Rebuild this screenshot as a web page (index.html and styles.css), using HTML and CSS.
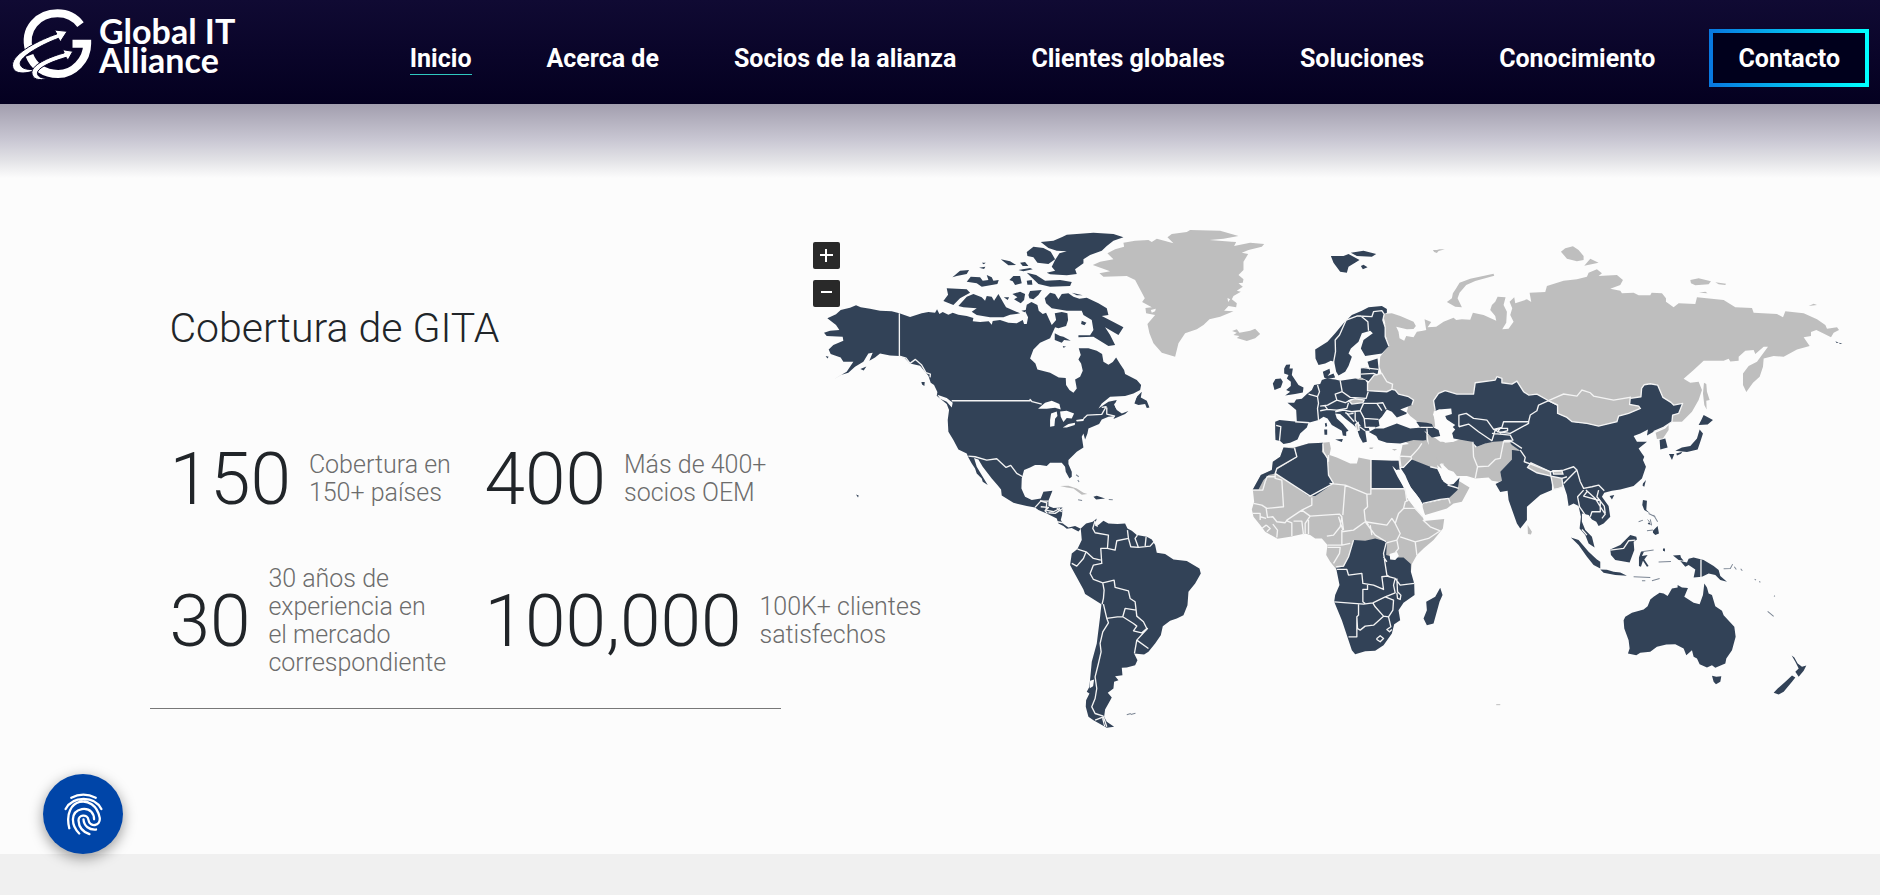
FILE: index.html
```html
<!DOCTYPE html>
<html lang="es">
<head>
<meta charset="utf-8">
<meta name="viewport" content="width=device-width, initial-scale=1">
<title>Global IT Alliance</title>
<link rel="stylesheet" href="styles.css">
</head>
<body>
<header class="header">
  <a class="brand" href="#inicio" aria-label="Global IT Alliance">
    <svg class="brand-mark" viewBox="30 24 248 222" aria-hidden="true">
      <path d="M87 152C68 85 116 40 172 40C199 40 223 50 241 74" fill="none" stroke="#fff" stroke-width="24"/>
      <path d="M217 131H261C261 180 220 222 174 222C130 222 100 198 88 166" fill="none" stroke="#fff" stroke-width="24"/>
      <path d="M201 94L163 90L170 102C124 117 35 160 37 196C38 228 87 221 111 208C86 210 60 208 60 190C61 169 126 133 175 115L180 126Z" fill="#fff" stroke="#09052a" stroke-width="3"/>
      <path d="M218 154L188 149L192 159C160 167 95 191 95 218C96 237 116 244 142 235C121 235 110 229 112 216C118 200 160 183 198 172L203 181Z" fill="#fff" stroke="#09052a" stroke-width="3"/>
    </svg>
    <span class="brand-text">Global IT<br>Alliance</span>
  </a>
  <nav class="nav">
    <a class="nav-link nav-link-active" href="#inicio">Inicio</a>
    <a class="nav-link" href="#acerca">Acerca de</a>
    <a class="nav-link" href="#socios">Socios de la alianza</a>
    <a class="nav-link" href="#clientes">Clientes globales</a>
    <a class="nav-link" href="#soluciones">Soluciones</a>
    <a class="nav-link" href="#conocimiento">Conocimiento</a>
  </nav>
  <a class="contact" href="#contacto">Contacto</a>
</header>
<main class="coverage">
  <section class="facts">
    <h1 class="title">Cobertura de GITA</h1>
    <div class="stats">
      <div class="stat"><strong class="number">150</strong><span class="label">Cobertura en<br>150+ países</span></div>
      <div class="stat"><strong class="number">400</strong><span class="label">Más de 400+<br>socios OEM</span></div>
      <div class="stat"><strong class="number">30</strong><span class="label">30 años de<br>experiencia en<br>el mercado<br>correspondiente</span></div>
      <div class="stat"><strong class="number">100,000</strong><span class="label">100K+ clientes<br>satisfechos</span></div>
    </div>
  </section>
  <section class="map">
    <svg class="world" viewBox="813 220 1067 515" role="img" aria-label="Mapa de cobertura mundial">
      <!-- North America -->
      <g transform="translate(800 220) scale(.33333)">
        <path class="on" d="M82 295L108 283L122 270L150 263L168 256L182 262L210 266L240 272L275 274L298 280L330 291L365 280L385 276L405 278L411 268L418 282L428 276L445 284L458 278L475 284L500 288L520 294L518 304L540 306L566 304L575 314L578 303L600 300L625 308L650 310L668 300L672 312L680 312L684 292L676 275L680 254L694 246L712 255L716 272L728 282L738 278L748 300L755 315L768 300L764 280L785 276L802 280L804 300L798 318L775 325L765 322L750 355L720 368L700 388L690 415L706 430L712 448L750 458L776 472L797 474L798 495L808 510L820 518L830 505L825 478L840 470L848 452L843 430L835 418L842 405L836 385L865 385L890 392L906 402L910 425L925 434L938 426L948 412L960 432L972 450L975 462L1010 480L1023 495L1020 510L1000 520L975 528L930 530L905 550L895 565L925 545L950 540L943 555L950 570L965 580L985 573L975 582L940 597L945 588L925 590L905 598L897 612L865 625L862 640L855 658L850 640L845 650L850 682L830 695L805 720L805 732L815 755L815 770L808 775L797 755L795 740L785 728L765 728L750 728L740 738L720 735L705 735L690 742L672 750L665 775L664 805L675 830L695 840L722 835L730 815L757 812L752 825L745 842L745 858L760 864L787 862L786 885L782 900L790 912L805 922L825 918L842 926L835 934L815 924L800 926L790 918L775 910L770 895L740 880L715 870L705 862L680 858L640 848L605 826L603 808L592 795L575 775L548 740L535 718L522 714L530 740L548 770L563 795L548 785L545 775L530 760L525 745L515 730L505 712L500 700L475 688L460 660L445 635L443 600L447 570L440 552L410 527L412 516L402 495L392 488L385 467L360 437L330 430L312 412L298 408L270 406L240 400L225 412L208 422L218 398L205 400L190 425L165 440L145 458L125 464L100 478L140 455L160 425L130 425L122 412L92 402L86 388L100 375L130 362L128 350L80 348L72 338L90 332L118 330L108 315Z"/>
        <path class="on" d="M722 66L760 62L788 50L800 44L880 38L940 42L970 52L940 62L920 78L905 92L870 105L850 118L850 130L825 148L830 162L800 166L750 163L740 158L765 152L755 140L765 120L778 100L800 94L770 92L745 84Z"/>
        <path class="on" d="M680 96L700 80L730 84L752 95L765 118L745 132L712 128L700 112L682 108ZM680 158L708 165L735 182L780 180L815 186L810 198L750 200L715 192ZM734 235L750 218L765 222L775 238L785 222L805 220L820 230L838 236L860 233L895 250L920 265L925 285L905 288L940 306L970 322L955 345L915 322L930 345L945 375L925 378L880 350L835 352L835 346L870 346L880 330L875 300L850 285L845 272L800 272L755 265L738 250ZM815 218L848 226L830 226Z"/>
        <path class="on" d="M440 205L500 208L510 218L480 235L460 255L430 243L444 224ZM475 258L500 230L520 222L545 232L555 242L560 228L575 230L582 242L595 222L610 248L618 262L660 280L630 284L610 292L570 292L530 285L515 275L530 265L490 262ZM457 172L480 152L507 150L500 162L470 168ZM500 185L512 170L540 172L548 182L565 180L560 165L575 172L580 182L596 180L592 192L545 200L530 190ZM602 118L630 124L648 135L625 136ZM628 180L640 168L660 168L665 190L645 195L638 184ZM660 128L675 126L685 138L668 138ZM655 150L690 144L698 148L670 154ZM680 182L695 180L697 194L682 194ZM637 222L660 215L675 222L672 240L662 250L642 238L652 232ZM685 225L690 213L725 210L715 225L700 238L688 235ZM537 143L556 140L552 147ZM545 128h12l-6 5zM611 232l16 0-4 8zM664 272l16-3-6 8zM764 340L780 348L790 350L812 362L792 360L785 368L764 360ZM845 302l14 6-6 8-10-4zM788 378l10 2-8 3zM1003 550L1010 530L1025 515L1022 532L1040 542L1048 562L1040 564L1035 552L1015 555ZM181 447l18-8-8 12zM77 408l9 2-4 5zM364 486l10 0-1 12-7-5zM168 823l8 3-2 6zM880 830L890 827L915 835L888 838Z"/>
        <path class="off" d="M780 798L805 797L830 805L850 818L862 822L845 824L820 805L800 802Z"/>
        <path class="detail" d="M828 764l8 6M833 780l4 6M834 839l12 2M926 838l12 1"/>
        <path class="water" d="M714 566L735 548L755 542L778 552L782 568L765 563L740 566ZM753 580L770 574L772 588L765 596L763 618L750 620L750 600ZM780 574L800 572L822 580L815 595L800 594L790 606L782 590ZM788 622L805 612L825 608L824 615L800 622ZM828 600L852 596L850 603L830 604ZM942 552L960 540L1000 525L1012 526L1000 548L975 556L978 566L960 572L948 566ZM412 524L440 534L458 548L455 562L440 545L420 536Z"/>
        <path class="border" d="M298 280V408L318 414L330 430L346 418L365 435L378 458L391 462L390 472M455 542H690V538L696 545L725 552M850 596L862 585L905 583L918 560L905 562M920 562V582L945 588M505 708L525 710L560 720L590 716L618 742L632 736L650 760L668 770M705 862L722 843L745 843M722 860L745 862L735 872L742 880M770 865L785 875M745 878L765 880L790 864M770 905L790 908"/>
      </g>
      <!-- Greenland and Iceland -->
      <g transform="translate(1020 220) scale(.33333)">
        <path class="off" d="M218 135L240 125L280 118L262 100L285 88L312 80L310 68L345 62L385 60L395 66L410 56L460 70L442 52L455 42L500 36L510 30L600 32L655 48L610 56L568 60L635 65L648 66L642 78L690 68L732 72L725 80L685 90L665 98L684 102L670 125L670 150L655 165L670 178L668 188L655 190L668 200L650 212L662 215L640 228L635 238L650 250L648 262L625 258L612 272L640 274L600 290L568 298L550 315L530 328L495 340L475 370L465 410L425 398L400 370L388 340L382 312L405 285L378 280L376 264L395 262L366 246L374 235L345 180L320 168L250 170L238 160L270 154Z"/>
        <path class="water" d="M392 270l15-4-2 8-10 4zM622 234l8 4-6 8z"/>
        <path class="off" d="M636 333L650 328L658 338L690 332L705 326L720 342L705 355L680 363L650 354L658 348L640 345L650 338Z"/>
      </g>
      <!-- South America -->
      <g transform="translate(1040 500) scale(.33333)">
        <path class="on" d="M122 85L138 70L158 65L170 55L165 72L175 75L190 62L205 70L232 72L255 70L262 85L275 92L290 105L320 110L335 118L345 135L350 158L375 162L400 178L440 183L478 205L482 220L465 250L445 275L442 315L430 345L410 355L390 362L368 378L362 405L345 430L325 455L312 463L282 460L292 480L285 495L260 502L245 503L247 525L225 528L235 540L222 545L220 565L203 578L215 592L208 605L195 628L192 650L200 665L222 680L200 683L160 660L145 650L137 620L138 600L148 580L140 575L148 560L155 485L170 430L180 350L184 312L135 282L130 268L98 210L90 195L95 160L112 147L125 120Z"/>
        <path class="water" d="M165 65l8 0 0 16-8-4zM150 542l12-4-3 20-10 6zM190 648l2 20 4 12-4-2-6-22z"/>
        <path class="border" d="M165 62L158 85L165 98L205 105L202 145L182 145L185 190L160 195L150 220L160 238L188 248L222 240L225 262L265 272L270 295L285 305L288 330L255 325L248 350L280 370L290 378L280 392L305 398L320 385L310 365L290 348L288 330M112 147L138 155L160 175L182 180M138 155L130 175L110 198L95 190M202 145L225 150L230 122L265 115L262 90M265 115L272 140L295 142L285 115L292 105M295 142L330 138L342 125M318 110L315 138M188 248L192 270L190 295L186 312M190 312L200 355L232 350L248 350M200 355L205 368L188 395L180 430L183 455L175 490L165 530L170 565L165 595L155 620L165 640L190 648M305 398L322 385L290 420L325 445M290 420L283 460M165 660L190 650L200 680"/>
        <path class="border" d="M0 2L20 8L18 30M18 30L40 35L60 25"/>
        <path class="detail" d="M260 644l12-4M272 643l14-4"/>
      </g>
      <!-- Russia and northern islands -->
      <g transform="translate(1420 230) scale(.33333)">
        <path class="off" d="M-112 252L-85 250L-60 258L-20 275L-13 288L-20 297L-40 298L-72 290L-65 305L-62 325L-48 332L-42 318L-20 322L-10 305L8 302L18 300L13 268L33 276L22 292L48 290L70 275L100 263L108 270L125 268L150 269L158 248L190 255L228 272L225 258L210 240L215 225L225 215L232 200L256 202L250 225L260 245L258 278L246 298L265 296L280 275L270 255L276 235L268 215L282 202L285 220L320 208L333 216L328 188L375 186L380 168L430 152L470 148L500 140L505 128L530 118L545 130L535 138L590 135L608 150L600 165L570 176L600 182L605 190L640 188L655 196L690 196L694 188L725 190L737 205L737 215L760 232L775 220L825 222L830 202L910 210L945 232L995 234L1000 248L1070 252L1088 262L1095 244L1150 250L1190 268L1215 285L1220 296L1250 292L1256 300L1240 308L1232 322L1205 308L1188 300L1172 306L1172 318L1150 322L1168 348L1130 358L1090 380L1060 378L1030 385L1028 410L1018 440L998 458L978 486L968 465L968 430L985 408L1010 395L1043 350L1030 350L1005 372L1000 360L975 362L955 380L955 392L930 394L925 386L910 392L850 392L820 420L790 446L810 458L835 455L845 480L835 510L815 545L785 575L757 575L500 540L320 520L60 530L40 545L45 590L15 592L-30 558L-40 545L-35 525L-85 480L-100 455L-115 430L-122 410L-120 380L-95 348L-105 310L-105 280Z"/>
        <path class="off" d="M422 65L435 55L458 49L475 60L490 78L490 90L470 94L440 86ZM510 86L535 98L492 107ZM810 150L835 145L872 154L865 163L825 166L812 160ZM885 157L917 161L915 165L895 163ZM836 188L855 185L862 190ZM1165 228L1180 221L1190 225ZM38 60L50 60L58 58L74 58L55 63L50 69L42 66ZM80 216L95 205L98 190L108 175L118 158L150 146L220 131L222 137L165 153L138 165L118 188L112 205L125 232L105 230Z"/>
        <path class="on" d="M1245 334l10 4-6 1zM1257 338l9 4h-8z"/>
        <path class="off" d="M851 458L858 462L860 485L868 510L858 512L859 538L852 525L848 490Z"/>
      </g>
      <!-- Middle East, Central Asia, East Asia -->
      <g transform="translate(1420 370) scale(.33333)">
        <path class="off" d="M-60 205L15 188L40 200L60 215L100 215L125 205L158 215L165 232L215 212L250 210L275 215L305 235L275 245L275 268L240 305L245 332L235 335L215 332L205 322L165 325L140 318L110 318L100 305L85 300L65 280L48 285L30 262Z"/>
        <path class="on" d="M40 92L55 70L75 62L110 72L160 72L165 38L225 30L230 20L245 25L245 38L275 42L290 33L310 65L325 75L350 72L385 92L412 105L412 130L440 142L455 155L500 160L535 168L590 155L595 138L625 130L640 120L660 115L655 108L628 103L630 85L662 80L664 55L672 44L690 41L712 45L728 82L752 97L760 105L787 100L775 130L757 135L755 155L730 172L700 185L680 196L683 178L660 190L640 198L650 215L680 215L655 235L665 250L672 260L668 270L677 290L665 325L640 348L600 358L575 362L552 368L545 380L565 408L570 440L550 460L535 468L528 455L515 448L505 435L485 430L485 455L495 480L515 500L523 532L505 520L495 495L478 475L482 440L475 408L460 400L445 408L440 375L430 345L395 318L395 360L360 375L320 410L320 450L300 475L290 460L265 390L262 362L240 366L226 342L245 332L240 305L275 268L275 240L300 242L275 225L265 212L220 215L195 220L170 230L155 215L100 205L92 175L105 165L75 145L60 118L45 122Z"/>
        <path class="border" d="M45 122L40 92L55 70L75 62L110 72L160 72L165 38L225 30L230 20L245 25L245 38L275 42L290 33L310 65L325 75L350 72L385 92M630 85L662 80L664 55L672 44L690 41L712 45L728 82L752 97L760 105L787 100L775 130L757 135L755 155L730 172L700 185"/>
        <path class="water" d="M38 132L55 118L93 115L95 132L75 138L80 150L92 165L105 178L95 190L100 215L75 218L55 205L60 188L50 165Z"/>
        <path class="off edge" d="M385 92L412 80L430 72L470 78L485 60L510 68L520 78L580 90L630 82L628 103L655 108L660 115L625 130L595 138L590 155L535 168L500 160L455 155L440 142L412 130L412 105Z"/>
        <path class="off edge" d="M322 292L332 278L390 305L392 318L350 308ZM398 302L425 302L428 312L400 312ZM392 318L425 325L428 350L415 355L400 358Z"/>
        <path class="off" d="M322 465L335 485L332 493L323 492ZM706 188L735 175L745 165L745 180L728 205L710 207Z"/>
        <path class="on" d="M718 210L735 205L742 232L720 238ZM850 135L878 150L862 163L835 165L843 150ZM838 178L848 190L840 215L832 238L800 246L765 242L785 232L810 228L830 205ZM746 252L762 252L755 270ZM768 250l18-5-4 6-12 5zM668 340L677 330L672 350L667 347ZM568 378L582 375L575 388ZM668 390L680 392L678 420L690 430L672 420L666 405ZM698 482L712 468L716 490L705 495L698 488ZM680 446l8 8-6 8 10 2-8-12zM452 502L475 510L505 545L530 568L540 575L540 595L520 585L500 560L475 525ZM540 598L560 599L580 605L600 607L620 617L585 615L550 608ZM570 538L600 525L630 495L648 500L650 508L640 515L642 540L628 577L585 570L572 555ZM656 562L662 545L672 543L665 558L682 555L672 568L685 588L680 590L668 572L662 590L656 588ZM758 556L780 555L782 562L790 572L775 570ZM780 573L800 577L805 566L820 562L850 570L880 588L895 600L900 618L920 635L900 630L885 615L865 610L845 620L820 622L825 598L805 585L795 590ZM728 535l6 0 0 9-6-2z"/>
        <path class="detail" d="M664 545L700 540M685 430L705 440M700 435L712 455M655 455L668 450M680 482L698 480M715 576L752 574M640 620L690 622M695 632L718 625M910 596L930 595L937 582M942 590L948 598M665 632l10 0M690 448l4 18"/>
        <path class="border" d="M-25 200L-5 180L15 192M20 195L25 230L30 262L48 285L70 282M158 215L160 260L172 290L165 325M172 290L205 288L225 268L240 265L250 215L275 215L305 235M116 170V135L138 130L160 145L200 150L220 178L245 172L250 155L325 155L330 135L350 122L355 105L385 92L412 105M116 170L145 162L175 185L215 212L225 180L245 172M220 178L240 188L262 182L262 175L240 175L232 185L270 190L325 160L325 155M215 190L270 195L278 210L250 212M300 240L315 262L312 275L332 282L390 305L430 300L460 290L470 300L455 315L430 340M470 300L480 335L490 355L515 350L535 345L552 362M440 320L425 325M490 360L472 380L478 410L495 435M497 360L525 385L540 410L555 432L545 445M535 360L530 380L552 408L555 430M500 365L490 378L540 392L540 425L515 425L510 440M570 540L610 535L625 512L645 510M842 568V622M485 478L500 495"/>
      </g>
      <!-- Europe -->
      <g transform="translate(1240 240) scale(.33333)">
        <path class="on" d="M272 48L310 48L325 42L358 60L325 80L320 98L300 95L280 68ZM332 38L370 32L408 42L395 50L350 48ZM362 78L370 74L382 82L368 88Z"/>
        <path class="on" d="M225 328L262 305L285 280L310 250L335 225L365 212L385 202L425 198L440 207L440 218L432 222L428 240L435 262L435 290L446 318L425 340L375 348L362 325L370 300L398 280L390 272L365 280L355 305L332 325L325 340L335 350L325 378L315 395L295 406L288 395L282 365L272 362L255 370L235 375L226 355Z"/>
        <path class="on" d="M248 395L268 386L270 398L262 408L280 400L285 412L262 417L252 412ZM132 385L138 374L150 373L148 385L158 385L155 405L165 420L175 435L190 442L188 457L165 462L135 466L150 455L138 450L152 438L152 425L140 415L145 405L132 400ZM98 430L106 417L122 415L128 425L122 442L103 450Z"/>
        <path class="on" d="M105 545L118 540L170 545L168 510L142 488L162 488L168 478L185 476L200 462L215 450L222 435L240 432L245 420L258 415L285 418L300 422L345 415L375 420L382 430L385 452L440 455L455 448L465 450L475 462L505 470L520 480L515 495L480 508L500 518L498 522L470 532L455 515L440 508L425 530L415 540L418 558L405 562L385 560L388 572L375 572L380 605L368 608L358 590L350 565L340 555L315 535L300 522L285 520L290 535L308 552L325 572L318 575L318 588L308 586L305 572L275 555L262 535L250 530L235 540L205 548L200 562L180 580L172 598L150 608L130 612L120 603L106 600L105 575ZM285 598L308 597L305 606ZM252 568h9v16h-8zM254 550l5-2 2 10-5 3zM382 365L412 355L415 385L412 405L400 415L388 424L362 412L362 385L378 382L390 390Z"/>
        <path class="on" d="M386 576L405 565L430 565L470 550L510 565L545 562L558 580L558 602L520 600L480 610L440 608L415 600L408 588ZM528 545L560 548L575 552L580 562L595 570L600 588L575 592L560 578L540 562Z"/>
        <path class="off edge" d="M382 452L382 430L402 405L425 400L440 425L457 432L455 448L440 455ZM326 482L345 476L372 480L368 488L335 492ZM346 553L354 548L357 570L350 572Z"/>
        <path class="off" d="M350 418L362 412L372 420ZM388 622h12l-4 5h-8zM455 627l16 0-8 5z"/>
        <path class="border" d="M280 368L286 335L285 300L298 285L318 240L350 228L362 228L383 245L385 272M352 228L395 230L400 215L425 212L432 222L428 240L435 262L435 290L446 318M455 448L465 450L475 462L505 470L520 480L515 495M362 382L415 388M362 402L400 400L412 405M165 545L208 548M108 556L122 560L118 602M205 462L232 470L235 490L232 505L235 540M232 435L238 455L232 470M300 422L306 455L285 462L290 480L262 495L240 498M306 455L330 472L378 475L384 455M290 480L315 488L335 478M240 512L262 508L290 510L320 505L325 488M255 498L262 508M285 515L310 510L335 515L360 512L370 490M345 515L345 540L360 558M318 518L342 545M360 512L372 535L415 538M372 535L375 562L405 562M370 490L410 490L425 512M410 490L428 488L438 508M358 560L375 572M315 518L325 522L340 520M540 562L578 562M560 565L562 585"/>
      </g>
      <!-- Africa and Arabia -->
      <g transform="translate(1240 420) scale(.33333)">
        <path class="off" d="M130 82L160 82L205 70L248 68L268 66L272 85L268 105L290 112L330 130L350 130L355 112L392 120L455 122L475 122L478 150L468 150L458 138L480 180L495 210L505 240L525 262L545 285L552 303L612 297L608 325L580 360L550 385L530 405L515 432L512 455L290 450L270 425L258 405L262 375L245 355L225 355L210 345L195 340L150 350L112 356L75 335L60 315L40 290L35 268L42 245L38 208L62 165L95 150L98 125L120 110Z"/>
        <path class="off" d="M487 75L530 68L558 60L575 90L588 112L605 145L570 142L512 118L490 140L478 140L480 108ZM548 252L625 235L650 205L655 182L688 202L665 245L640 250L620 265L555 285L545 270Z"/>
        <path class="on" d="M130 82L162 85L170 110L110 145L105 160L85 165L70 180L55 208L38 208L62 165L95 150L98 125L120 110ZM165 82L205 70L248 68L245 95L262 115L265 165L280 190L225 228L205 228L107 160L110 148L170 112ZM394 120L455 122L475 122L478 150L468 150L458 138L492 206L394 206ZM482 145L492 140L515 118L570 140L590 145L600 165L610 185L625 195L640 192L658 172L652 210L625 235L600 238L548 252L530 225L510 200L495 165Z"/>
        <path class="on" d="M288 443L310 440L325 410L340 360L375 362L405 355L440 365L438 405L465 412L490 412L512 432L512 455L522 490L523 525L490 548L475 570L480 600L462 612L455 640L430 675L405 692L375 693L345 702L335 690L320 645L305 600L282 545L285 525L298 495L290 455ZM600 503L607 525L598 545L580 610L560 615L550 595L560 570L558 545L585 530Z"/>
        <path class="water" d="M448 402L470 395L476 408L465 420L450 418ZM456 138L468 150L476 148L480 165L500 180L514 205L540 238L550 270L556 292L548 292L522 262L500 232L490 200L472 170ZM590 135L612 152L622 175L620 190L605 178Z"/>
        <path class="border" d="M163 84L170 110L110 145L105 160L210 228L280 190L265 165L262 115L250 95L248 70M265 105V125M268 190L315 195L380 222M315 195L308 285M392 120V222L380 222L382 260L372 270L375 300L385 315M392 206H495L500 245M105 160L105 175L125 180L130 260L80 265L65 255L40 250M80 170H105M38 210H68L75 185L82 168M215 232L215 255L185 270L140 300L135 308L110 305L98 290L82 292L78 265M185 270L210 288L298 282L305 290L310 330M140 302L155 308L155 348M160 303H185L190 345M195 340L195 310L210 288M205 342V300M305 290L300 320L280 345L260 348M305 330L305 375L262 375M305 335L340 330L375 305L405 345L438 365M308 330L295 290M375 305L440 315L455 295L465 310M390 315L395 345M465 310L480 340L470 360L438 368M465 310L475 280L490 265L525 265L548 290M490 265L495 245L505 240M548 300L570 320L600 332L565 355L525 365L480 350M525 365L530 405M470 360L475 385L465 398M438 368L430 400L440 465L448 470M340 360L325 410L310 438L288 440M262 382L300 382L298 400L280 430M305 375L330 370M36 280H60L60 300M60 290L78 295M78 315L65 325M78 315L90 325L80 335M98 312L112 330L110 352M430 410L440 425"/>
        <path class="border" d="M290 448L320 448L325 465L365 460L368 490L400 495L430 508L425 470L440 468L465 475L480 495L522 490M382 495L382 508L368 508L368 545L375 550M282 545L370 552L398 548L435 530L465 518L460 495L465 475M355 552L355 585L350 590V650L325 650M350 590L352 625L360 630L375 618L400 615L430 588L405 560L398 548M430 588L445 590L452 620L440 628L448 635L455 628M435 530L460 540L458 570L445 590M470 475L472 515L482 525L480 538L472 535L470 518M410 655L420 647L430 655L420 665L410 658ZM480 108L512 110L535 85L545 70M512 110L515 118M570 140L590 145M548 250L600 238L625 235L630 250M482 140L478 108M515 115L490 142L483 142M622 195L640 200L655 205"/>
      </g>
      <!-- Oceania -->
      <g transform="translate(1560 500) scale(.33333)">
        <path class="on" d="M190 360L195 350L215 338L250 328L262 318L270 298L280 290L298 278L310 280L322 288L335 265L352 262L352 255L365 262L383 264L372 290L400 308L418 312L428 285L432 250L440 262L445 280L455 285L465 318L485 332L490 345L522 380L526 410L515 450L498 475L495 490L465 503L455 495L440 502L418 492L410 475L400 470L395 450L378 465L370 445L345 432L318 433L290 440L270 455L240 458L228 465L203 460L208 445L205 420L192 385ZM455 527L468 530L483 528L480 545L467 552L460 545ZM694 466L702 472L712 490L725 500L738 496L730 512L715 530L705 515L715 505L705 485ZM695 526L705 532L695 545L670 575L655 583L640 578L652 565L675 545Z"/>
        <path class="detail" d="M622 334L640 349M641 287l3 2M583 237l4 3M597 244l3 3M541 206l5 6"/>
      </g>
      <path class="off" d="M1496 704h4v1h-4z"/>
    </svg>
    <div class="zoom">
      <button class="zoom-button" type="button" aria-label="Acercar"><svg viewBox="0 0 27 27" aria-hidden="true"><path d="M7 13H20M13 7V20"/></svg></button>
      <button class="zoom-button" type="button" aria-label="Alejar"><svg viewBox="0 0 27 27" aria-hidden="true"><path d="M8 12H19"/></svg></button>
    </div>
  </section>
</main>
<div class="next-band"></div>
<button class="privacy" type="button" aria-label="Preferencias de privacidad">
  <svg viewBox="130 125 118 132" aria-hidden="true"><path d="M152 142Q188 123 226 142M135 176C156 136 222 135 243 176M146 234C123 142 222 125 238 202C242 230 207 231 204 209C201 190 173 193 174 211C175 232 190 246 207 252M176 250C151 225 148 183 184 176C211 172 221 192 221 207M189 207C190 228 207 240 227 238"/></svg>
</button>
</body>
</html>
```
FILE: styles.css
```css
* { box-sizing: border-box; }

body {
  margin: 0;
  min-height: 100vh;
  display: flex;
  flex-direction: column;
  background: #fcfcfc;
  color: #212529;
  font-family: Roboto, "Liberation Sans", sans-serif;
}

.header {
  display: flex;
  align-items: center;
  justify-content: space-between;
  min-height: 104px;
  padding: 0 11px 0 10px;
  background: linear-gradient(#100a33, #040020);
}

.brand {
  display: flex;
  align-items: center;
  gap: 6px;
  align-self: flex-start;
  padding-top: 8px;
  color: #fff;
  text-decoration: none;
}

.brand-mark { width: 83px; height: 74px; }

.brand-text {
  font: 700 34px/29px Lato, sans-serif;
  white-space: nowrap;
}

.nav {
  display: flex;
  gap: 75px;
  margin: 14px 54px 0 auto;
}

.nav-link, .contact {
  color: #fff;
  font-size: 25px;
  font-weight: 700;
  line-height: 30px;
  text-decoration: none;
  white-space: nowrap;
}

.nav-link { border-bottom: 1px solid transparent; }
.nav-link-active { border-color: #2fc7c0; }

.contact {
  margin-top: 12px;
  padding: 11px 25px 9px;
  border: 4px solid;
  border-image: linear-gradient(90deg, #0878e0, #00ffff) 1;
  background: #00001c;
}

.coverage {
  flex: 1;
  display: grid;
  grid-template-columns: minmax(0, 630fr) minmax(0, 1067fr);
  align-items: start;
  gap: 32px;
  padding: 116px 0 0 8%;
  background: linear-gradient(#a29eae, #c9c7d3 36px, #e2e2e6 56px, #fcfcfc 74px);
}

.facts {
  padding: 83px 0 31px 19px;
  border-bottom: 1px solid #777;
}

.title {
  margin: 0 0 86px;
  font-size: 41px;
  font-weight: 300;
  line-height: 50px;
  white-space: nowrap;
}

.stats {
  display: grid;
  grid-template-columns: repeat(2, minmax(0, 1fr));
  row-gap: 46px;
  margin-right: -19px;
}

.stat { display: flex; align-items: center; gap: 18px; min-height: 80px; }

.number { font-size: 73px; font-weight: 300; line-height: 80px; }

.label {
  color: #6c6c6c;
  font-size: 25px;
  font-weight: 300;
  line-height: 28px;
  white-space: nowrap;
}

.map { position: relative; }
.world { display: block; width: 100%; height: auto; }
.on { fill: #324257; }
.off { fill: #bebebe; }
.water { fill: #fcfcfc; }
.edge { stroke: #f4f4f4; stroke-width: 4; }
.border { fill: none; stroke: #f4f4f4; stroke-width: 4; stroke-linejoin: round; }
.detail { fill: none; stroke: #7c8694; stroke-width: 3; }

.zoom {
  position: absolute;
  top: 22px;
  left: 0;
  display: grid;
  gap: 11px;
}

.zoom-button {
  width: 27px;
  height: 27px;
  padding: 0;
  border: 0;
  border-radius: 2px;
  background: #292929;
}

.zoom-button svg { display: block; stroke: #fff; stroke-width: 2; }

.next-band { height: 41px; background: #f0f0f0; }

.privacy {
  position: fixed;
  left: 43px;
  bottom: 41px;
  display: grid;
  place-items: center;
  width: 80px;
  height: 80px;
  padding: 0;
  border: 0;
  border-radius: 50%;
  background: #0045a8;
  box-shadow: 0 4px 14px rgb(0 0 0 / 40%);
}

.privacy svg {
  width: 39px;
  height: 44px;
  fill: none;
  stroke: #fff;
  stroke-width: 7;
  stroke-linecap: round;
}
```
